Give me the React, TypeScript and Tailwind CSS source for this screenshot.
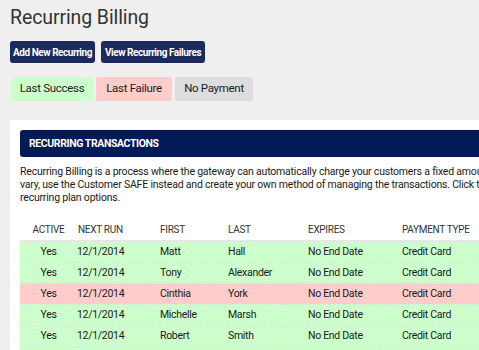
import React from "react";

type Row = {
    active: string;
    nextRun: string;
    first: string;
    last: string;
    expires: string;
    payment: string;
    failed?: boolean;
};

const rows: Row[] = [
    { active: "Yes", nextRun: "12/1/2014", first: "Matt", last: "Hall", expires: "No End Date", payment: "Credit Card" },
    { active: "Yes", nextRun: "12/1/2014", first: "Tony", last: "Alexander", expires: "No End Date", payment: "Credit Card" },
    { active: "Yes", nextRun: "12/1/2014", first: "Cinthia", last: "York", expires: "No End Date", payment: "Credit Card", failed: true },
    { active: "Yes", nextRun: "12/1/2014", first: "Michelle", last: "Marsh", expires: "No End Date", payment: "Credit Card" },
    { active: "Yes", nextRun: "12/1/2014", first: "Robert", last: "Smith", expires: "No End Date", payment: "Credit Card" },
    { active: "Yes", nextRun: "12/1/2014", first: "Sarah", last: "Jones", expires: "No End Date", payment: "Credit Card" },
];

export default function App() {
    return (
        <div
            className="h-[350px] w-[479px] overflow-hidden bg-[#efefef] text-[#1a1a1a]"
            style={{ fontFamily: "Roboto, 'Liberation Sans', sans-serif" }}
        >
            <div className="w-[700px] pl-[10px] pt-[6px]">
                <h1 className="text-[19.5px] leading-[24px] tracking-[-0.1px] text-[#333]">Recurring Billing</h1>

                {/* action buttons */}
                <div className="mt-[11px] flex gap-[6px]">
                    <button className="h-[22px] w-[85px] whitespace-nowrap rounded-[3px] bg-[#1c2a5c] text-[10px] font-bold tracking-[-0.45px] text-white">
                        Add New Recurring
                    </button>
                    <button className="h-[22px] w-[104px] whitespace-nowrap rounded-[3px] bg-[#1c2a5c] text-[10px] font-bold tracking-[-0.45px] text-white">
                        View Recurring Failures
                    </button>
                </div>

                {/* legend */}
                <div className="mt-[14px] flex gap-[3px] pl-[1px] text-[11.5px] tracking-[-0.3px]">
                    <div className="flex h-[24px] w-[82px] items-center justify-center rounded-[2px] bg-[#ccffcc]">Last Success</div>
                    <div className="flex h-[24px] w-[76px] items-center justify-center rounded-[2px] bg-[#ffcccc]">Last Failure</div>
                    <div className="flex h-[24px] w-[78px] items-center justify-center rounded-[2px] bg-[#dddddd]">No Payment</div>
                </div>

                {/* panel */}
                <div className="mt-[19px] bg-white p-[10px]">
                    <div className="flex h-[27px] items-center rounded-[3px] bg-[#021a56] pl-[9px] text-[10.5px] font-bold tracking-[-0.4px] text-white">
                        RECURRING TRANSACTIONS
                    </div>
                    <p className="mt-[8px] whitespace-nowrap text-[10.5px] leading-[13px] tracking-[-0.2px]">
                        Recurring Billing is a process where the gateway can automatically charge your customers a fixed amount on a set schedule. If the amount will
                        <br />
                        vary, use the Customer SAFE instead and create your own method of managing the transactions. Click the plus icon to view the
                        <br />
                        recurring plan options.
                    </p>

                    <table className="mt-[18px] w-[660px] border-collapse text-[10.5px] tracking-[-0.3px]">
                        <thead>
                            <tr className="border-b-2 border-[#e6e6e6] text-[10px] text-[#333]">
                                <th className="w-[57px] pb-[3px] text-center font-normal">ACTIVE</th>
                                <th className="w-[83px] pb-[3px] pl-[1px] text-left font-normal">NEXT RUN</th>
                                <th className="w-[68px] pb-[3px] text-left font-normal">FIRST</th>
                                <th className="w-[80px] pb-[3px] text-left font-normal">LAST</th>
                                <th className="w-[94px] pb-[3px] text-left font-normal">EXPIRES</th>
                                <th className="pb-[3px] text-left font-normal">PAYMENT TYPE</th>
                            </tr>
                        </thead>
                        <tbody>
                            {rows.map((r, i) => (
                                <tr
                                    key={i}
                                    className={`h-[21px] border-b border-dashed border-[#d8e8d8] ${r.failed ? "bg-[#ffcccc]" : "bg-[#ccffcc]"}`}
                                >
                                    <td className="text-center">{r.active}</td>
                                    <td>{r.nextRun}</td>
                                    <td>{r.first}</td>
                                    <td>{r.last}</td>
                                    <td>{r.expires}</td>
                                    <td>{r.payment}</td>
                                </tr>
                            ))}
                        </tbody>
                    </table>
                </div>
            </div>
        </div>
    );
}
